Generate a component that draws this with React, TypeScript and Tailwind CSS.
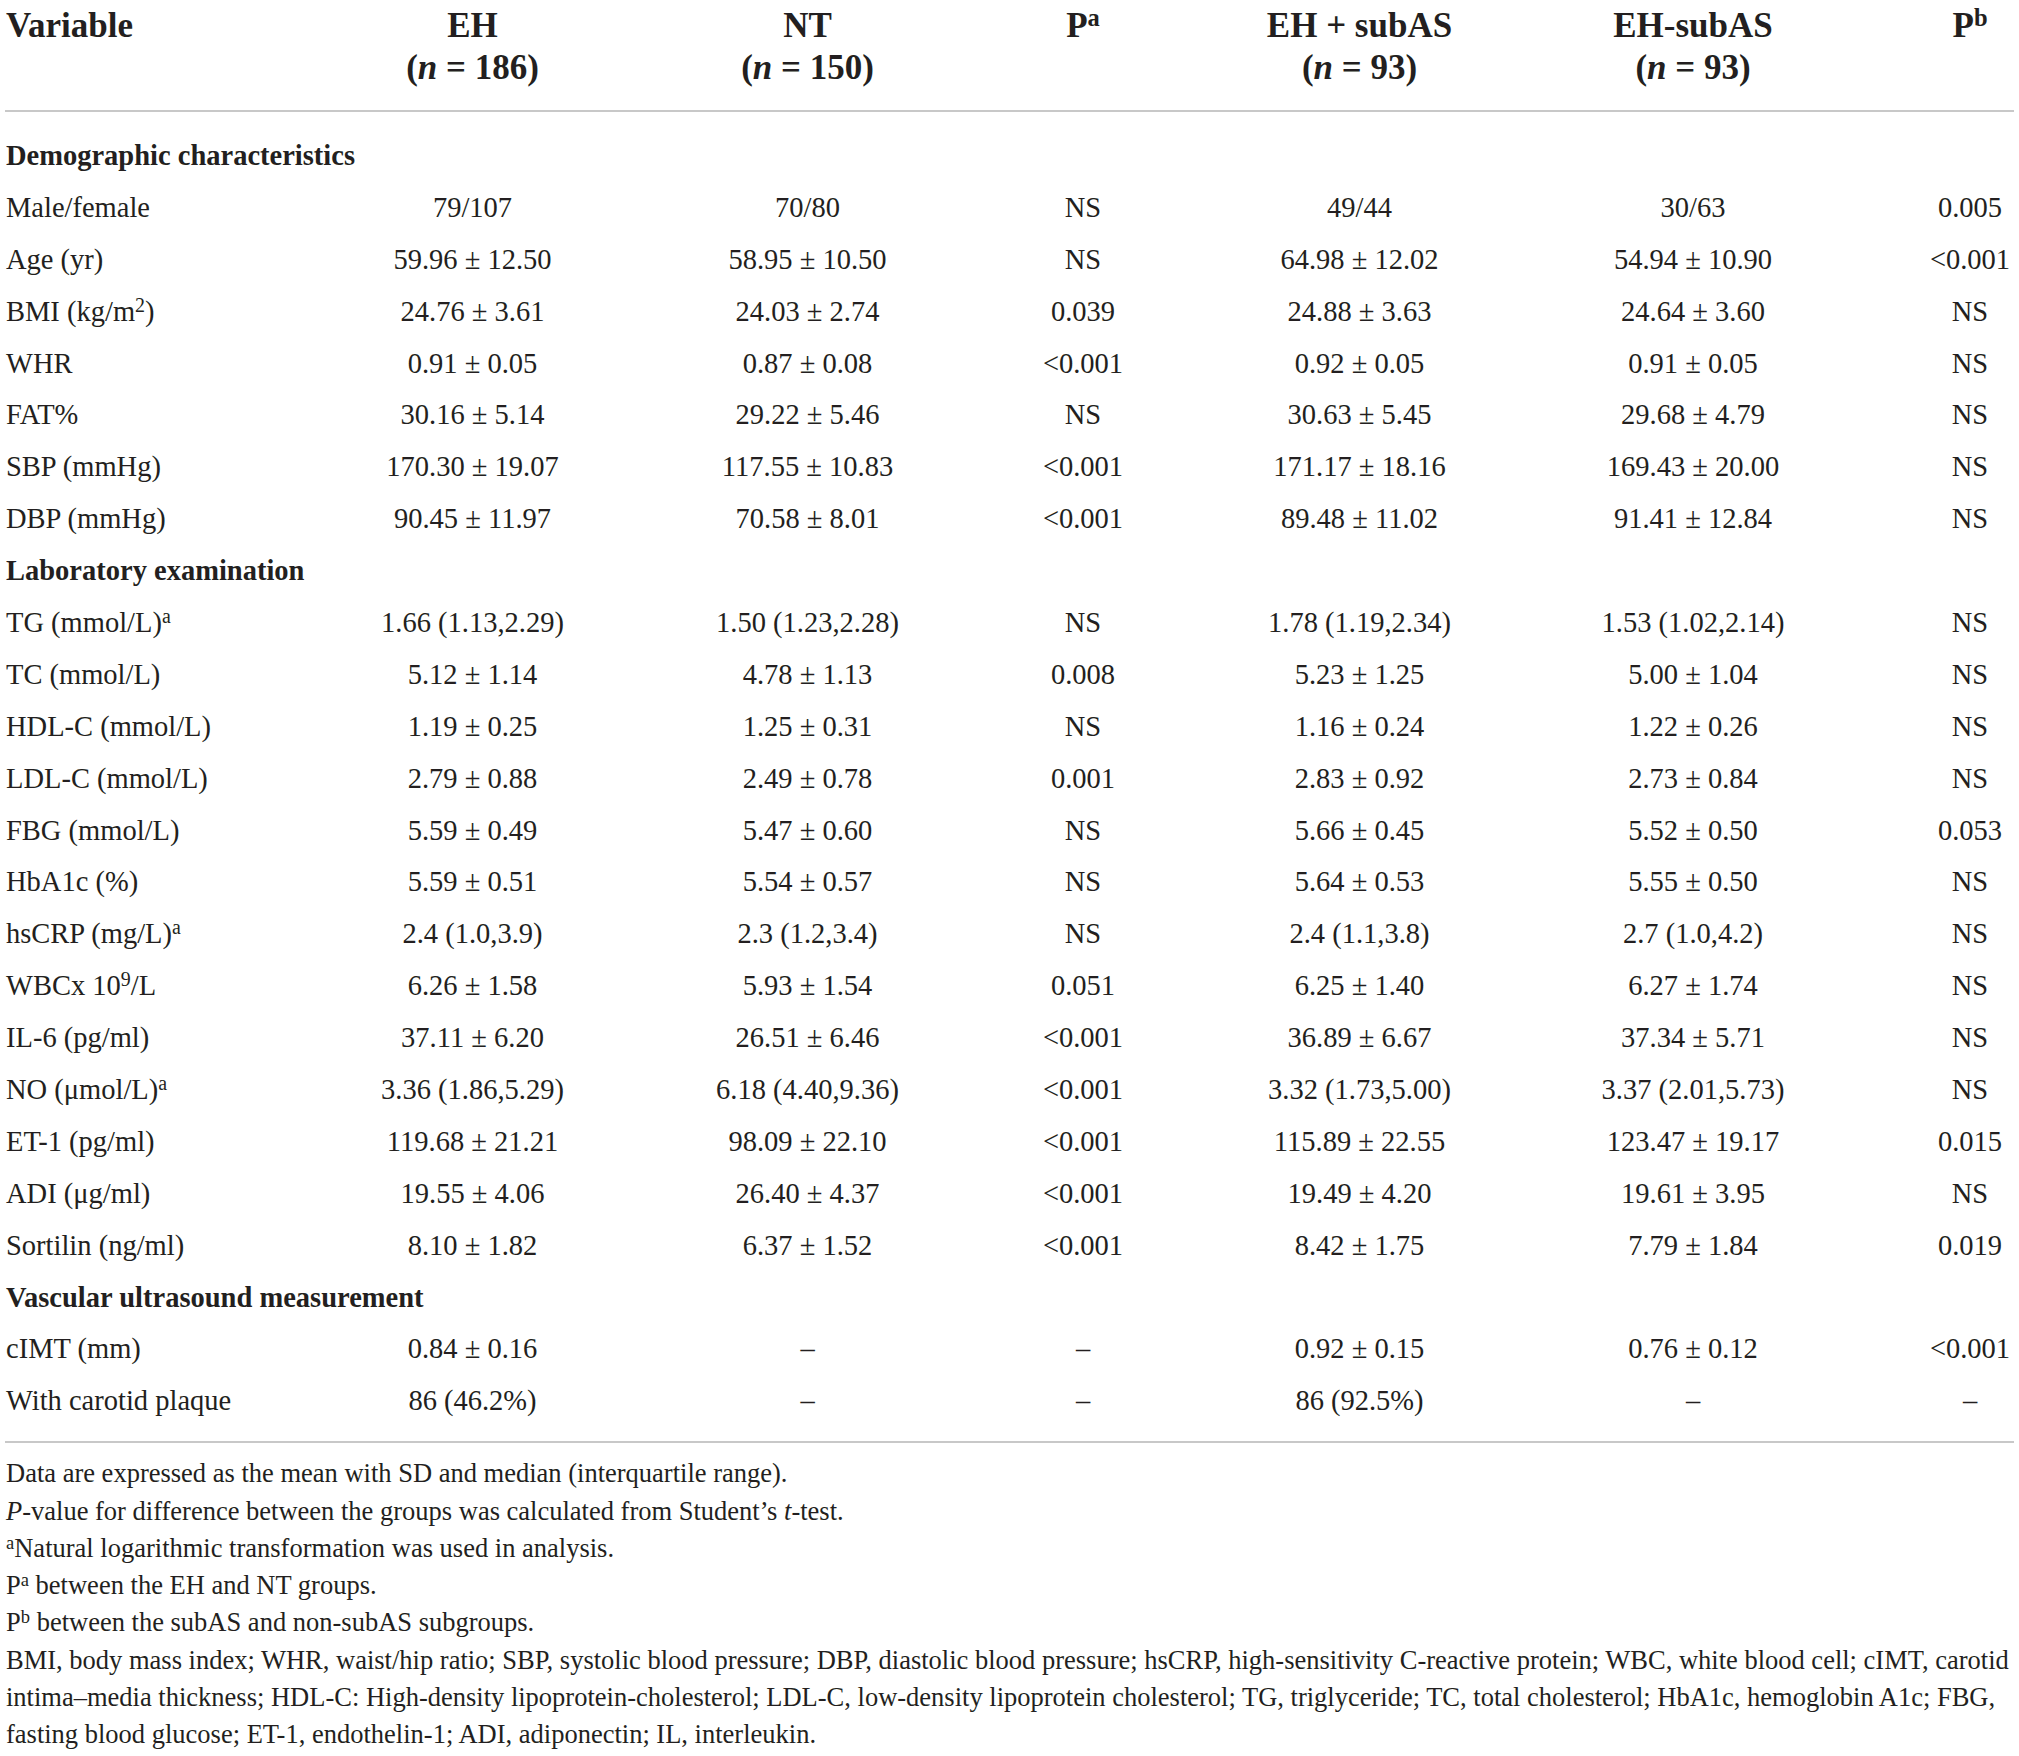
import React from 'react';

type Row = { label: React.ReactNode; values: string[] } | { section: string };

const Sup: React.FC<{ children: React.ReactNode }> = ({ children }) => (
  <sup className="text-[0.7em] top-[-0.45em]">{children}</sup>
);

const rows: Row[] = [
  { section: 'Demographic characteristics' },
  { label: 'Male/female', values: ['79/107', '70/80', 'NS', '49/44', '30/63', '0.005'] },
  { label: 'Age (yr)', values: ['59.96 ± 12.50', '58.95 ± 10.50', 'NS', '64.98 ± 12.02', '54.94 ± 10.90', '<0.001'] },
  { label: <>BMI (kg/m<Sup>2</Sup>)</>, values: ['24.76 ± 3.61', '24.03 ± 2.74', '0.039', '24.88 ± 3.63', '24.64 ± 3.60', 'NS'] },
  { label: 'WHR', values: ['0.91 ± 0.05', '0.87 ± 0.08', '<0.001', '0.92 ± 0.05', '0.91 ± 0.05', 'NS'] },
  { label: 'FAT%', values: ['30.16 ± 5.14', '29.22 ± 5.46', 'NS', '30.63 ± 5.45', '29.68 ± 4.79', 'NS'] },
  { label: 'SBP (mmHg)', values: ['170.30 ± 19.07', '117.55 ± 10.83', '<0.001', '171.17 ± 18.16', '169.43 ± 20.00', 'NS'] },
  { label: 'DBP (mmHg)', values: ['90.45 ± 11.97', '70.58 ± 8.01', '<0.001', '89.48 ± 11.02', '91.41 ± 12.84', 'NS'] },
  { section: 'Laboratory examination' },
  { label: <>TG (mmol/L)<Sup>a</Sup></>, values: ['1.66 (1.13,2.29)', '1.50 (1.23,2.28)', 'NS', '1.78 (1.19,2.34)', '1.53 (1.02,2.14)', 'NS'] },
  { label: 'TC (mmol/L)', values: ['5.12 ± 1.14', '4.78 ± 1.13', '0.008', '5.23 ± 1.25', '5.00 ± 1.04', 'NS'] },
  { label: 'HDL-C (mmol/L)', values: ['1.19 ± 0.25', '1.25 ± 0.31', 'NS', '1.16 ± 0.24', '1.22 ± 0.26', 'NS'] },
  { label: 'LDL-C (mmol/L)', values: ['2.79 ± 0.88', '2.49 ± 0.78', '0.001', '2.83 ± 0.92', '2.73 ± 0.84', 'NS'] },
  { label: 'FBG (mmol/L)', values: ['5.59 ± 0.49', '5.47 ± 0.60', 'NS', '5.66 ± 0.45', '5.52 ± 0.50', '0.053'] },
  { label: 'HbA1c (%)', values: ['5.59 ± 0.51', '5.54 ± 0.57', 'NS', '5.64 ± 0.53', '5.55 ± 0.50', 'NS'] },
  { label: <>hsCRP (mg/L)<Sup>a</Sup></>, values: ['2.4 (1.0,3.9)', '2.3 (1.2,3.4)', 'NS', '2.4 (1.1,3.8)', '2.7 (1.0,4.2)', 'NS'] },
  { label: <>WBCx 10<Sup>9</Sup>/L</>, values: ['6.26 ± 1.58', '5.93 ± 1.54', '0.051', '6.25 ± 1.40', '6.27 ± 1.74', 'NS'] },
  { label: 'IL-6 (pg/ml)', values: ['37.11 ± 6.20', '26.51 ± 6.46', '<0.001', '36.89 ± 6.67', '37.34 ± 5.71', 'NS'] },
  { label: <>NO (μmol/L)<Sup>a</Sup></>, values: ['3.36 (1.86,5.29)', '6.18 (4.40,9.36)', '<0.001', '3.32 (1.73,5.00)', '3.37 (2.01,5.73)', 'NS'] },
  { label: 'ET-1 (pg/ml)', values: ['119.68 ± 21.21', '98.09 ± 22.10', '<0.001', '115.89 ± 22.55', '123.47 ± 19.17', '0.015'] },
  { label: 'ADI (μg/ml)', values: ['19.55 ± 4.06', '26.40 ± 4.37', '<0.001', '19.49 ± 4.20', '19.61 ± 3.95', 'NS'] },
  { label: 'Sortilin (ng/ml)', values: ['8.10 ± 1.82', '6.37 ± 1.52', '<0.001', '8.42 ± 1.75', '7.79 ± 1.84', '0.019'] },
  { section: 'Vascular ultrasound measurement' },
  { label: 'cIMT (mm)', values: ['0.84 ± 0.16', '–', '–', '0.92 ± 0.15', '0.76 ± 0.12', '<0.001'] },
  { label: 'With carotid plaque', values: ['86 (46.2%)', '–', '–', '86 (92.5%)', '–', '–'] },
];

const gridCols = 'grid grid-cols-[242px_461px_209px_342px_211px_456px_98px]';

const App: React.FC = () => {
  return (
    <div className="w-[2019px] min-h-[1756px] bg-white text-[#231f20] font-['Liberation_Serif',serif]">
      {/* Header */}
      <div className={`${gridCols} h-[110px] pt-[5px] text-[35px] font-bold leading-[42px]`}>
        <div className="pl-[6px]">Variable</div>
        <div className="text-center">EH<br />(<i>n</i> = 186)</div>
        <div className="text-center">NT<br />(<i>n</i> = 150)</div>
        <div className="text-center">P<Sup>a</Sup></div>
        <div className="text-center">EH + subAS<br />(<i>n</i> = 93)</div>
        <div className="text-center">EH-subAS<br />(<i>n</i> = 93)</div>
        <div className="text-center">P<Sup>b</Sup></div>
      </div>
      <div className="mx-[5px] h-[2px] bg-[#c8c8c8]" />

      {/* Body */}
      <div className="mt-[18px]">
        {rows.map((row, i) =>
          'section' in row ? (
            <div key={i} className="h-[51.9px] pl-[6px] text-[28.5px] font-bold leading-[51.9px]">
              {row.section}
            </div>
          ) : (
            <div key={i} className={`${gridCols} h-[51.9px] text-[28.5px] leading-[51.9px]`}>
              <div className="pl-[6px] whitespace-nowrap">{row.label}</div>
              {row.values.map((v, j) => (
                <div key={j} className="text-center whitespace-nowrap">{v}</div>
              ))}
            </div>
          )
        )}
      </div>
      <div className="mx-[5px] mt-[14px] h-[2px] bg-[#c8c8c8]" />

      {/* Footnotes */}
      <div className="mt-[12px] pl-[6px] text-[26.5px] leading-[37.3px] whitespace-nowrap">
        <div>Data are expressed as the mean with SD and median (interquartile range).</div>
        <div><i>P</i>-value for difference between the groups was calculated from Student’s <i>t</i>-test.</div>
        <div><Sup>a</Sup>Natural logarithmic transformation was used in analysis.</div>
        <div>P<Sup>a</Sup> between the EH and NT groups.</div>
        <div>P<Sup>b</Sup> between the subAS and non-subAS subgroups.</div>
        <div>BMI, body mass index; WHR, waist/hip ratio; SBP, systolic blood pressure; DBP, diastolic blood pressure; hsCRP, high-sensitivity C-reactive protein; WBC, white blood cell; cIMT, carotid</div>
        <div>intima–media thickness; HDL-C: High-density lipoprotein-cholesterol; LDL-C, low-density lipoprotein cholesterol; TG, triglyceride; TC, total cholesterol; HbA1c, hemoglobin A1c; FBG,</div>
        <div>fasting blood glucose; ET-1, endothelin-1; ADI, adiponectin; IL, interleukin.</div>
      </div>
    </div>
  );
};

export default App;
